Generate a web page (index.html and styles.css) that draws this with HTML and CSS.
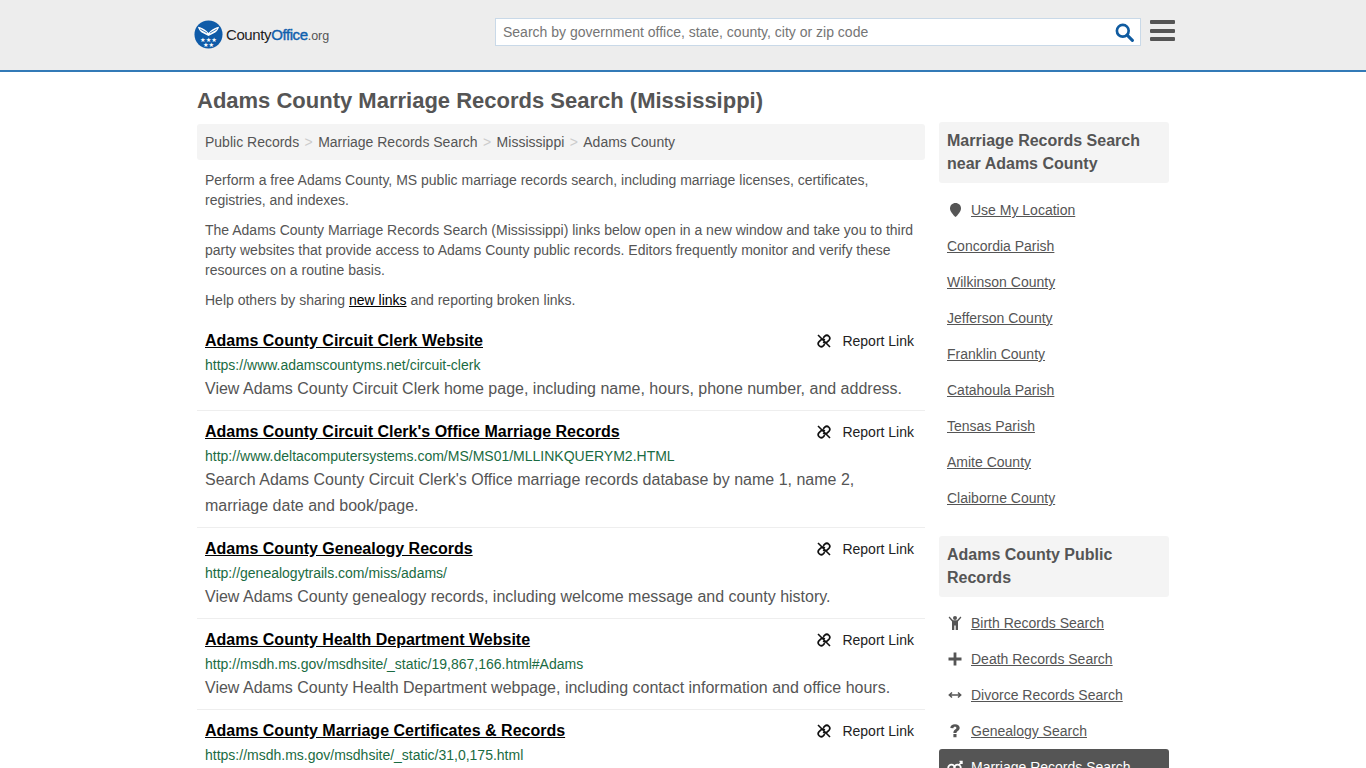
FILE: index.html
```html
<!DOCTYPE html>
<html lang="en">

<head>
  <meta charset="UTF-8">
  <meta name="viewport" content="width=device-width, initial-scale=1.0">
  <title>Adams County Marriage Records Search (Mississippi)</title>
  <link rel="stylesheet" href="styles.css">
</head>

<body>

  <svg class="icon-defs" width="0" height="0">
    <symbol id="i-unlink" viewBox="0 0 16 16">
      <path d="M7.200 4.800 8.800 3.200a2.900 2.900 0 0 1 4.100 4.100L11.300 8.900a2.900 2.900 0 0 1-4.100 0M8.800 11.200 7.200 12.800a2.900 2.900 0 0 1-4.100-4.100L4.700 7.100a2.900 2.900 0 0 1 4.100 0" fill="none" stroke="currentColor" stroke-width="1.700"/>
      <path d="M2 2 14 14" fill="none" stroke="currentColor" stroke-width="1.600"/>
    </symbol>
  </svg>

  <header class="site-header">
    <div class="header-inner">
      <a class="logo" href="#">
        <svg class="logo-mark" viewBox="0 0 30 30" width="29" height="29">
          <circle cx="15" cy="15" r="14.500" fill="#0f5ba8"/>
          <path d="M4 7c3 .5 6.500 2 9 4.500l2 2 2-2C19.500 9 23 7.500 26 7c-1 3.500-3 6-6 7l-5 2.500L10 14C7 13 5 10.500 4 7z" fill="#fff"/>
          <path d="M6.500 9.500l7 4M23.500 9.500l-7 4" stroke="#0f5ba8" stroke-width=".8"/>
          <text class="logo-stars" x="15" y="22.500" text-anchor="middle">★★★</text>
          <text class="logo-stars" x="15" y="28" text-anchor="middle">★★</text>
        </svg>
        <span class="logo-text">County<b>Office</b><small>.org</small></span>
      </a>
      <form class="search-box">
        <input class="search-input" type="text" placeholder="Search by government office, state, county, city or zip code">
        <svg class="search-icon" viewBox="0 0 20 20" width="19" height="19">
          <circle cx="8.200" cy="8.200" r="6.200" fill="none" stroke="currentColor" stroke-width="2.800"/>
          <path d="M12.800 12.800 18.300 18.300" stroke="currentColor" stroke-width="3.200" stroke-linecap="round"/>
        </svg>
      </form>
      <div class="menu-btn"><span></span><span></span><span></span></div>
    </div>
  </header>

  <div class="page">
    <main class="main-col">
      <h1>Adams County Marriage Records Search (Mississippi)</h1>
      <nav class="crumbs">
        <a href="#">Public Records</a><i>&gt;</i>
        <a href="#">Marriage Records Search</a><i>&gt;</i>
        <a href="#">Mississippi</a><i>&gt;</i>
        <a href="#">Adams County</a>
      </nav>
      <div class="intro">
        <p>Perform a free Adams County, MS public marriage records search, including marriage licenses, certificates, registries, and indexes.</p>
        <p>The Adams County Marriage Records Search (Mississippi) links below open in a new window and take you to third party websites that provide access to Adams County public records. Editors frequently monitor and verify these resources on a routine basis.</p>
        <p>Help others by sharing <a href="#">new links</a> and reporting broken links.</p>
      </div>

      <div class="result">
        <div class="result-top">
          <a class="result-title" href="#">Adams County Circuit Clerk Website</a>
          <span class="report"><svg width="16" height="16"><use href="#i-unlink"/></svg>Report Link</span>
        </div>
        <div class="result-url">https://www.adamscountyms.net/circuit-clerk</div>
        <div class="result-desc">View Adams County Circuit Clerk home page, including name, hours, phone number, and address.</div>
      </div>
      <div class="result">
        <div class="result-top">
          <a class="result-title" href="#">Adams County Circuit Clerk's Office Marriage Records</a>
          <span class="report"><svg width="16" height="16"><use href="#i-unlink"/></svg>Report Link</span>
        </div>
        <div class="result-url">http://www.deltacomputersystems.com/MS/MS01/MLLINKQUERYM2.HTML</div>
        <div class="result-desc">Search Adams County Circuit Clerk's Office marriage records database by name 1, name 2, marriage date and book/page.</div>
      </div>
      <div class="result">
        <div class="result-top">
          <a class="result-title" href="#">Adams County Genealogy Records</a>
          <span class="report"><svg width="16" height="16"><use href="#i-unlink"/></svg>Report Link</span>
        </div>
        <div class="result-url">http://genealogytrails.com/miss/adams/</div>
        <div class="result-desc">View Adams County genealogy records, including welcome message and county history.</div>
      </div>
      <div class="result">
        <div class="result-top">
          <a class="result-title" href="#">Adams County Health Department Website</a>
          <span class="report"><svg width="16" height="16"><use href="#i-unlink"/></svg>Report Link</span>
        </div>
        <div class="result-url">http://msdh.ms.gov/msdhsite/_static/19,867,166.html#Adams</div>
        <div class="result-desc">View Adams County Health Department webpage, including contact information and office hours.</div>
      </div>
      <div class="result">
        <div class="result-top">
          <a class="result-title" href="#">Adams County Marriage Certificates &amp; Records</a>
          <span class="report"><svg width="16" height="16"><use href="#i-unlink"/></svg>Report Link</span>
        </div>
        <div class="result-url">https://msdh.ms.gov/msdhsite/_static/31,0,175.html</div>
      </div>
    </main>

    <aside class="side-col">
      <h2 class="side-head">Marriage Records Search near Adams County</h2>
      <ul class="side-list">
        <li class="has-icon">
          <svg class="side-icon" viewBox="0 0 16 16" width="16" height="16"><path d="M8.500 1c3.200 0 5.500 2.300 5.500 5.200 0 3.200-3 6.500-5.500 8.800C6 12.700 3 9.400 3 6.200 3 3.300 5.300 1 8.500 1z" fill="currentColor"/></svg>
          <a href="#">Use My Location</a>
        </li>
        <li><a href="#">Concordia Parish</a></li>
        <li><a href="#">Wilkinson County</a></li>
        <li><a href="#">Jefferson County</a></li>
        <li><a href="#">Franklin County</a></li>
        <li><a href="#">Catahoula Parish</a></li>
        <li><a href="#">Tensas Parish</a></li>
        <li><a href="#">Amite County</a></li>
        <li><a href="#">Claiborne County</a></li>
      </ul>

      <h2 class="side-head">Adams County Public Records</h2>
      <ul class="side-list second">
        <li class="has-icon">
          <svg class="side-icon" viewBox="0 0 16 16" width="16" height="16"><circle cx="8" cy="3" r="2" fill="currentColor"/><path d="M2.500 1.500 6 5.200h4l3.500-3.700.9.9-3.400 4.200V15H8.700v-4.500H7.300V15H5V6.600L1.600 2.400z" fill="currentColor"/></svg>
          <a href="#">Birth Records Search</a>
        </li>
        <li class="has-icon">
          <svg class="side-icon" viewBox="0 0 16 16" width="16" height="16"><path d="M6.600 1.500h2.800v5.100h5.100v2.800H9.400v5.100H6.600V9.400H1.500V6.600h5.100z" fill="currentColor"/></svg>
          <a href="#">Death Records Search</a>
        </li>
        <li class="has-icon">
          <svg class="side-icon" viewBox="0 0 16 16" width="16" height="16"><path d="M3 8h10M5 5.500 2.300 8 5 10.500M11 5.500 13.700 8 11 10.500" fill="none" stroke="currentColor" stroke-width="1.500"/></svg>
          <a href="#">Divorce Records Search</a>
        </li>
        <li class="has-icon">
          <svg class="side-icon" viewBox="0 0 16 16" width="16" height="16"><path d="M3.300 5c0-2.300 2-3.800 4.700-3.800 2.800 0 4.700 1.500 4.700 3.600 0 3.100-3.200 3-3.200 5.200H6.400c0-3.500 3-3.500 3-5 0-.7-.6-1.200-1.500-1.200-1 0-1.500.6-1.600 1.500zM6.400 11h3.100v3.200H6.400z" fill="currentColor"/></svg>
          <a href="#">Genealogy Search</a>
        </li>
        <li class="has-icon active">
          <svg class="side-icon" viewBox="0 0 16 16" width="16" height="16"><circle cx="4.500" cy="9" r="3.300" fill="none" stroke="currentColor" stroke-width="1.800"/><circle cx="10.500" cy="9" r="3.300" fill="none" stroke="currentColor" stroke-width="1.800"/><path d="M12 6l2.500-3M12.500 2.500h2.500V5" fill="none" stroke="currentColor" stroke-width="1.400"/></svg>
          <a href="#">Marriage Records Search</a>
        </li>
      </ul>
    </aside>
  </div>

</body>

</html>
```

FILE: styles.css
```css
html,
body {
  height: 768px;
  overflow: hidden;
}

body {
  margin: 0;
  background: #fff;
  font-family: "Liberation Sans", Arial, sans-serif;
  font-size: 14px;
  line-height: 20px;
  color: #555;
}

.icon-defs {
  position: absolute;
}

/* header */

.site-header {
  height: 70px;
  background: #ededed;
  border-bottom: 2px solid #337ab7;
}

.header-inner {
  width: 982px;
  margin-left: 194px;
  height: 70px;
  display: flex;
  align-items: flex-start;
}

.logo {
  display: flex;
  align-items: center;
  margin-top: 20px;
  width: 301px;
  color: #222;
  text-decoration: none;
}

.logo-mark {
  flex: none;
}

.logo-stars {
  font-family: "DejaVu Sans", sans-serif;
  font-size: 6.500px;
  fill: #fff;
}

.logo-text {
  margin: 2px 0 0 3px;
  font-family: "Liberation Sans", Arial, sans-serif;
  font-size: 15px;
  letter-spacing: -0.4px;
}

.logo-text b {
  font-weight: 400;
  color: #1060ad;
  -webkit-text-stroke: 0.4px #1060ad;
}

.logo-text small {
  font-size: 12.500px;
  color: #555;
  letter-spacing: 0;
}

.search-box {
  width: 644px;
  height: 26px;
  margin-top: 18px;
  margin-right: 9px;
  display: flex;
  align-items: center;
  background: #fff;
  border: 1px solid #c9d9e8;
}

.search-input {
  flex: 1;
  height: 24px;
  padding: 0 8px 0 7px;
  border: 0;
  outline: 0;
  font-family: "Liberation Sans", Arial, sans-serif;
  font-size: 14px;
  background: none;
}

.search-input::placeholder {
  color: #757575;
}

.search-icon {
  margin-right: 6px;
  color: #0f5ba0;
}

.menu-btn {
  margin-top: 20px;
  width: 25px;
  display: flex;
  flex-direction: column;
  gap: 4.500px;
}

.menu-btn span {
  height: 4px;
  background: #555;
  border-radius: 1px;
}

/* layout */

.page {
  width: 972px;
  margin-left: 197px;
  display: flex;
  gap: 14px;
  align-items: flex-start;
}

.main-col {
  width: 728px;
  flex: none;
}

.side-col {
  width: 230px;
  flex: none;
  padding-top: 50px;
}

h1 {
  margin: 16px 0 10px;
  font-size: 22px;
  line-height: 26px;
  font-weight: 700;
  color: #555;
}

.crumbs {
  height: 36px;
  padding: 0 8px;
  display: flex;
  align-items: center;
  background: #f4f4f4;
  border-radius: 3px;
}

.crumbs a {
  color: #555;
  text-decoration: none;
}

.crumbs i {
  font-style: normal;
  color: #ccc;
  margin: 0 5.400px;
}

.intro {
  padding: 10px 8px 0;
}

.intro p {
  margin: 0 0 10px;
}

.intro a {
  color: #000;
  text-decoration: underline;
}

/* results */

.result {
  padding: 9px 8px 8px;
  border-bottom: 1px solid #eee;
}

.result-top {
  display: flex;
  justify-content: space-between;
  align-items: center;
  height: 24px;
}

.result-title {
  font-size: 16px;
  font-weight: 700;
  color: #000;
  text-decoration: underline;
}

.report {
  display: flex;
  align-items: center;
  gap: 10px;
  padding-right: 3px;
  color: #222;
}

.report svg {
  color: #111;
}

.result-url {
  margin: 2px 0 1px;
  color: #1a6b42;
}

.result-desc {
  font-size: 16px;
  line-height: 26px;
  color: #555;
}

/* sidebar */

.side-head {
  margin: 0;
  padding: 7px 8px 8px;
  background: #f4f4f4;
  border-radius: 3px;
  font-size: 16px;
  line-height: 23px;
  font-weight: 700;
  color: #555;
}

.side-list {
  list-style: none;
  margin: 9px 0 20px;
  padding: 0;
}

.side-list.second {
  margin-top: 8px;
}

.side-list li {
  height: 36px;
  padding: 0 8px;
  display: flex;
  align-items: center;
}

.side-list li a {
  color: #555;
  text-decoration: underline;
}

.side-list .side-icon {
  flex: none;
  margin-right: 8px;
  color: #555;
}

.side-list .active {
  background: #555;
  border-radius: 3px;
}

.side-list .active a,
.side-list .active .side-icon {
  color: #fff;
}
```
